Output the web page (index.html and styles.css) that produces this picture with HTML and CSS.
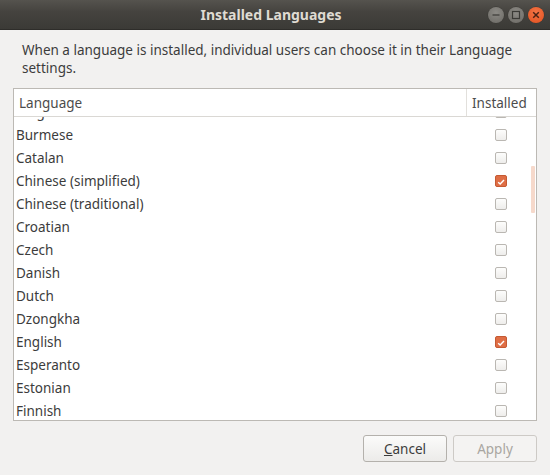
FILE: index.html
```html
<!DOCTYPE html>
<html>
<head>
<meta charset="utf-8">
<link rel="stylesheet" href="styles.css">
</head>
<body>
<div class="window">
  <div class="titlebar">
    <div></div>
    <div class="title">Installed Languages</div>
    <div class="controls">
      <span class="wbtn min"><svg width="16" height="16" viewBox="0 0 16 16"><line x1="4.5" y1="8" x2="11.5" y2="8" stroke="#3b3a36" stroke-width="1.2"/></svg></span>
      <span class="wbtn max"><svg width="16" height="16" viewBox="0 0 16 16"><rect x="4.5" y="4.5" width="7" height="7" fill="none" stroke="#3b3a36" stroke-width="1.2"/></svg></span>
      <span class="wbtn close"><svg width="16" height="16" viewBox="0 0 16 16"><path d="M5.2 5.2 L10.8 10.8 M10.8 5.2 L5.2 10.8" stroke="#4a2214" stroke-width="1.5"/></svg></span>
    </div>
  </div>
  <div class="content">
    <p class="desc">When a language is installed, individual users can choose it in their Language settings.</p>
    <div class="tree">
      <div class="thead">
        <div class="th lang">Language</div>
        <div class="th inst">Installed</div>
      </div>
      <div class="tbody">
        <div class="rows">
          <div class="row"><span class="name">Bulgarian</span><span class="cell"><span class="cb"></span></span></div>
          <div class="row"><span class="name">Burmese</span><span class="cell"><span class="cb"></span></span></div>
          <div class="row"><span class="name">Catalan</span><span class="cell"><span class="cb"></span></span></div>
          <div class="row"><span class="name">Chinese (simplified)</span><span class="cell"><span class="cb on"><svg width="12" height="12" viewBox="0 0 12 12"><path d="M2.6 6.2 L5 8.5 L9.6 3.6" fill="none" stroke="#fff" stroke-width="1.7"/></svg></span></span></div>
          <div class="row"><span class="name">Chinese (traditional)</span><span class="cell"><span class="cb"></span></span></div>
          <div class="row"><span class="name">Croatian</span><span class="cell"><span class="cb"></span></span></div>
          <div class="row"><span class="name">Czech</span><span class="cell"><span class="cb"></span></span></div>
          <div class="row"><span class="name">Danish</span><span class="cell"><span class="cb"></span></span></div>
          <div class="row"><span class="name">Dutch</span><span class="cell"><span class="cb"></span></span></div>
          <div class="row"><span class="name">Dzongkha</span><span class="cell"><span class="cb"></span></span></div>
          <div class="row"><span class="name">English</span><span class="cell"><span class="cb on"><svg width="12" height="12" viewBox="0 0 12 12"><path d="M2.6 6.2 L5 8.5 L9.6 3.6" fill="none" stroke="#fff" stroke-width="1.7"/></svg></span></span></div>
          <div class="row"><span class="name">Esperanto</span><span class="cell"><span class="cb"></span></span></div>
          <div class="row"><span class="name">Estonian</span><span class="cell"><span class="cb"></span></span></div>
          <div class="row"><span class="name">Finnish</span><span class="cell"><span class="cb"></span></span></div>
          <div class="row"><span class="name">French</span><span class="cell"><span class="cb"></span></span></div>
        </div>
        <div class="scrollind"></div>
      </div>
    </div>
    <div class="actions">
      <button class="btn"><u>C</u>ancel</button>
      <button class="btn disabled">Apply</button>
    </div>
  </div>
</div>
</body>
</html>
```
FILE: styles.css
```css
html, body {
  margin: 0;
  padding: 0;
}
body {
  width: 550px;
  height: 475px;
  overflow: hidden;
  background: #f2f1f0;
  font-family: "Noto Sans", "DejaVu Sans", sans-serif;
  font-size: 13px;
  color: #3c3c3c;
}
.window {
  display: flex;
  flex-direction: column;
  height: 475px;
}
.titlebar {
  height: 30px;
  flex: none;
  display: grid;
  grid-template-columns: 1fr auto 1fr;
  align-items: center;
  background: linear-gradient(#55534e, #45433f 40%, #3b3a36);
  border-bottom: 1px solid #2e2d2a;
  box-sizing: border-box;
}
.title {
  color: #dfdbd2;
  font-weight: bold;
  font-size: 14px;
  padding-right: 8px;
}
.controls {
  justify-self: end;
  display: flex;
  gap: 4px;
  padding-right: 6px;
  padding-top: 1px;
}
.wbtn {
  width: 16px;
  height: 16px;
  border-radius: 50%;
  display: flex;
  background: radial-gradient(circle at 50% 35%, #8c8a85, #6b6964);
  box-shadow: 0 0 0 0.5px #3a3935;
}
.wbtn.close {
  background: radial-gradient(circle at 50% 35%, #f37546, #e2501f);
}
.content {
  flex: 1;
  display: flex;
  flex-direction: column;
  padding: 0 13px;
}
.desc {
  margin: 11px 0 0 9px;
  line-height: 18px;
  font-size: 13.5px;
  color: #3c3c3c;
}
.tree {
  margin-top: 11px;
  height: 333px;
  box-sizing: border-box;
  border: 1px solid #bcb9b4;
  background: #ffffff;
  display: flex;
  flex-direction: column;
}
.thead {
  height: 28px;
  flex: none;
  display: flex;
  box-sizing: border-box;
  border-bottom: 1px solid #dad8d4;
}
.th {
  display: flex;
  align-items: center;
  padding-left: 5px;
  font-size: 13.5px;
  color: #4c4c4c;
}
.th.lang {
  flex: 1;
  border-right: 1px solid #e2e0dc;
}
.th.inst {
  width: 64px;
  flex: none;
}
.tbody {
  flex: 1;
  overflow: hidden;
  position: relative;
}
.rows {
  margin-top: -17px;
}
.row {
  height: 23px;
  display: flex;
  align-items: center;
}
.name {
  flex: 1;
  padding-left: 2px;
  font-size: 13.5px;
  color: #3c3c3c;
}
.cell {
  width: 70px;
  display: flex;
  justify-content: center;
}
.cb {
  width: 12px;
  height: 12px;
  box-sizing: border-box;
  border: 1px solid #bab7b2;
  border-radius: 2px;
  background: linear-gradient(#fdfdfc, #eeedeb);
  display: flex;
}
.cb.on {
  border-color: #c55a33;
  background: #df6e45;
}
.scrollind {
  position: absolute;
  right: 1px;
  top: 49px;
  width: 4px;
  height: 47px;
  background: #f6d9cb;
  border-radius: 1px;
}
.actions {
  display: flex;
  justify-content: flex-end;
  gap: 6px;
  margin-top: 14px;
}
.btn {
  width: 84px;
  height: 27px;
  box-sizing: border-box;
  border: 1px solid #b4b1ac;
  border-radius: 3px;
  background: linear-gradient(#fbfbfa, #ecebe9);
  font-family: "Noto Sans", "DejaVu Sans", sans-serif;
  font-size: 13.5px;
  color: #3c3c3c;
  padding: 0;
}
.btn.disabled {
  color: #a9a6a1;
  border-color: #cdcac6;
  background: #f4f3f2;
}
```
